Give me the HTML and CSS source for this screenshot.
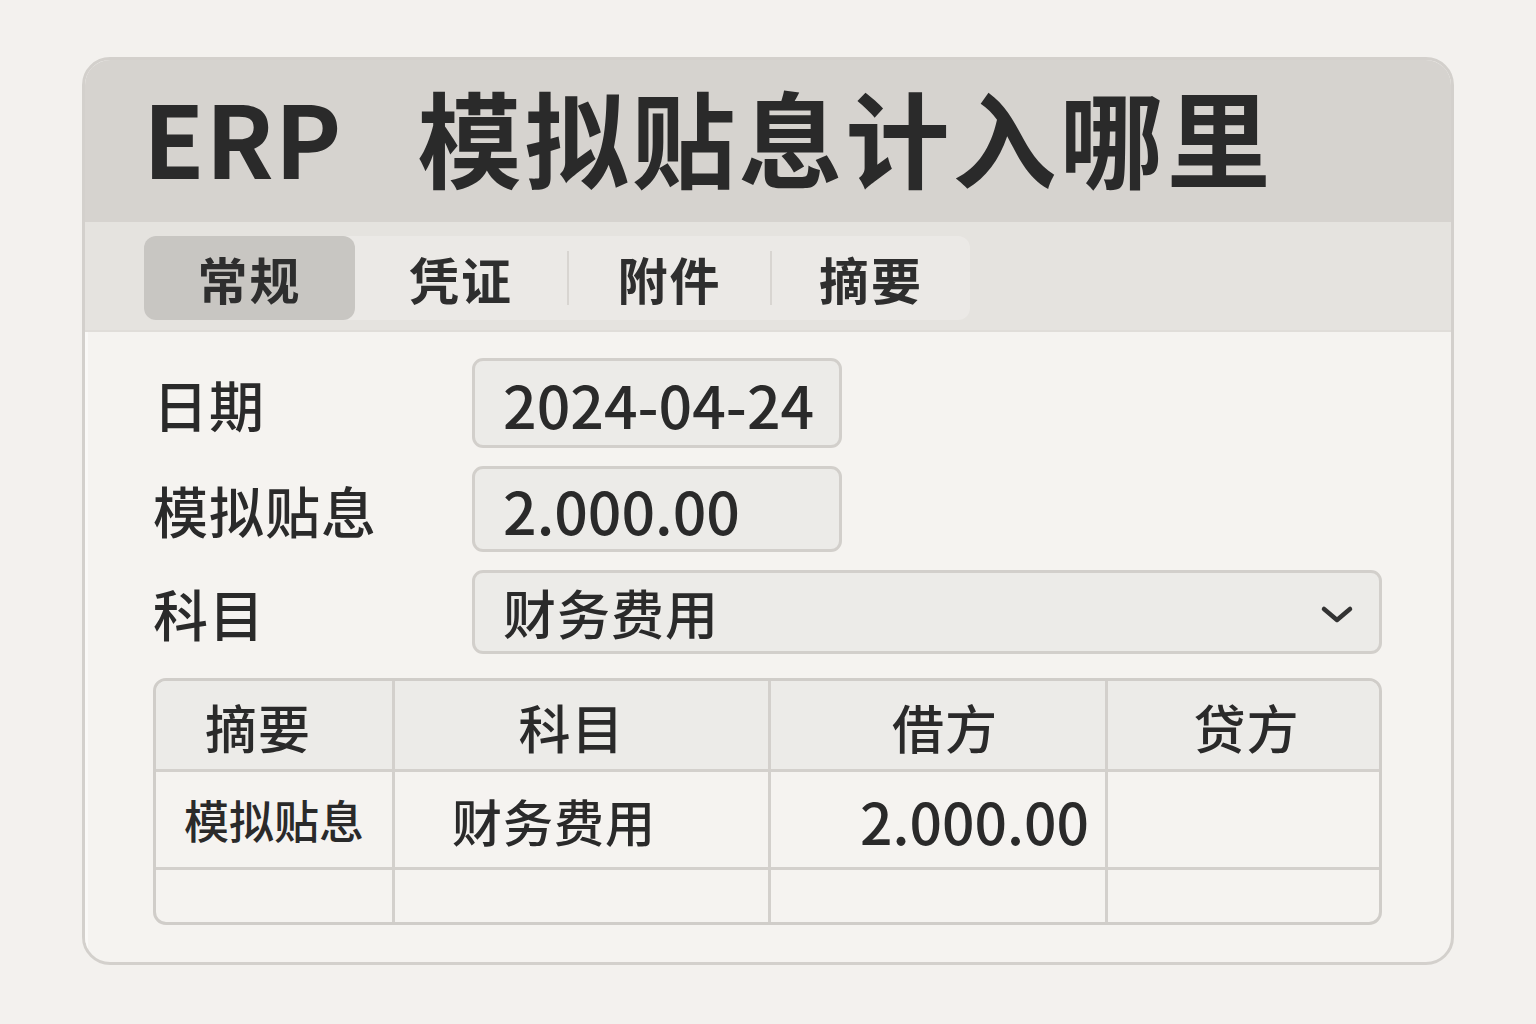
FILE: index.html
```html
<!DOCTYPE html>
<html lang="zh-CN">
<head>
<meta charset="utf-8">
<title>ERP 模拟贴息计入哪里</title>
<link rel="stylesheet" href="styles.css">
</head>
<body>
<div class="card">
  <header class="head">
    <h1 class="title"><span class="erp">ERP</span><span class="zh">模拟贴息计入哪里</span></h1>
  </header>
  <nav class="tabbar">
    <div class="tabs">
      <div class="tab active t1">常规</div>
      <div class="tab t2">凭证</div>
      <div class="sep"></div>
      <div class="tab t3">附件</div>
      <div class="sep"></div>
      <div class="tab t4">摘要</div>
    </div>
  </nav>
  <main class="content">
    <div class="form">
      <div class="label r1">日期</div>
      <div class="field short r1 digits">2024-04-24</div>
      <div class="label r2">模拟贴息</div>
      <div class="field short r2 digits">2.000.00</div>
      <div class="label r3">科目</div>
      <div class="field select r3">
        <span>财务费用</span>
        <svg class="chev" width="34" height="22" viewBox="0 0 34 22"><path d="M4 5 L17 16 L30 5" fill="none" stroke="#333" stroke-width="4.5" stroke-linecap="round" stroke-linejoin="round"/></svg>
      </div>
    </div>
    <div class="table">
      <div class="cell th c1">摘要</div>
      <div class="cell th c2">科目</div>
      <div class="cell th c3">借方</div>
      <div class="cell th c4">贷方</div>
      <div class="cell td c1 small">模拟贴息</div>
      <div class="cell td c2 left">财务费用</div>
      <div class="cell td c3 num">2.000.00</div>
      <div class="cell td c4"></div>
      <div class="cell te c1"></div>
      <div class="cell te c2"></div>
      <div class="cell te c3"></div>
      <div class="cell te c4"></div>
    </div>
  </main>
</div>
</body>
</html>
```

FILE: styles.css
```css
* { box-sizing: border-box; margin: 0; padding: 0; }
html, body { background: #f3f1ee; }
body {
  padding: 57px 82px;
  font-family: "Noto Sans CJK SC", "Noto Sans", sans-serif;
  color: #2a2a2a;
}
.card {
  width: 1372px;
  height: 908px;
  border: 3px solid #d3d0cc;
  border-radius: 28px;
  overflow: hidden;
  background: #f5f3f0;
  display: flex;
  flex-direction: column;
}
.head {
  height: 162px;
  background: #d6d3cf;
  display: flex;
  align-items: center;
  padding: 0 0 10px 58px;
}
.title {
  font-weight: 700;
  line-height: 1;
  display: flex;
  align-items: center;
}
.title .erp { font-size: 100px; letter-spacing: 1px; }
.title .zh { font-size: 104px; margin-left: 75px; letter-spacing: 3px; }
.tabbar {
  height: 110px;
  background: #e5e3df;
  padding: 14px 0 0 59px;
  border-bottom: 2px solid #e0ddd9;
}
.tabs {
  display: flex;
  align-items: center;
  width: 826px;
  height: 84px;
  background: #ebe9e6;
  border-radius: 12px;
}
.tab {
  height: 84px;
  display: flex;
  align-items: center;
  justify-content: center;
  font-size: 50px;
  font-weight: 700;
  color: #2e2e2e;
  letter-spacing: 2px;
}
.tab.active { background: #c8c6c2; border-radius: 12px; }
.t1 { width: 211px; }
.t2 { width: 212px; }
.t3 { width: 201px; }
.t4 { width: 198px; }
.sep { width: 2px; height: 54px; background: #d8d5d1; }
.content {
  flex: 1;
  padding: 26px 0 0 65px;
  border-left: 3px solid #faf9f7;
}
.form {
  display: grid;
  grid-template-columns: 319px 370px 540px;
  grid-template-rows: 90px 86px 84px;
  row-gap: 18px;
}
.label {
  font-size: 55px;
  font-weight: 500;
  display: flex;
  align-items: center;
  letter-spacing: 1px;
}
.field {
  background: #ecebe8;
  border: 3px solid #d2cfcb;
  border-radius: 11px;
  display: flex;
  align-items: center;
  padding-left: 28px;
  font-size: 53px;
  font-weight: 500;
  color: #2a2a2a;
}
.field.digits { font-size: 59px; }
.r1 { grid-row: 1; }
.r2 { grid-row: 2; }
.r3 { grid-row: 3; }
.label { grid-column: 1; }
.short { grid-column: 2; }
.select {
  grid-column: 2 / 4;
  width: 910px;
  justify-content: space-between;
  padding-right: 25px;
}
.select span { letter-spacing: 1px; }
.chev { display: block; margin-top: 6px; }
.table {
  margin-top: 24px;
  width: 1229px;
  display: grid;
  grid-template-columns: 239px 376px 337px 277px;
  grid-template-rows: 91px 98px 52px;
  border: 3px solid #d0cdc9;
  border-radius: 13px;
  overflow: hidden;
  background: #f5f3f0;
}
.cell {
  border-right: 3px solid #d3d0cc;
  border-bottom: 3px solid #d3d0cc;
  display: flex;
  align-items: center;
  justify-content: center;
  font-weight: 500;
}
.c4 { border-right: none; }
.te { border-bottom: none; }
.th {
  background: #ecebe8;
  font-size: 52px;
  letter-spacing: 1px;
  padding-top: 2px;
}
.th.c1 { justify-content: flex-start; padding-left: 49px; }
.th.c2 { padding-right: 20px; }
.th.c3 { padding-left: 14px; }
.td { background: #f5f3f0; font-size: 50px; }
.td.small { font-size: 45px; letter-spacing: 0; }
.td.left { justify-content: flex-start; padding-left: 57px; letter-spacing: 1px; }
.td.num { justify-content: flex-end; padding-right: 16px; font-size: 57px; }
```
